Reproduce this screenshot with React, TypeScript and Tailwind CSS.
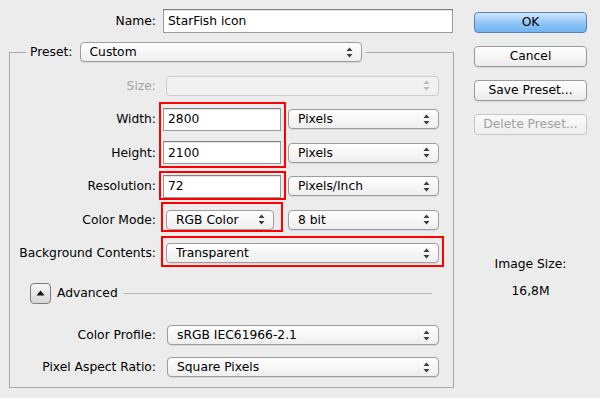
import type { ReactNode } from "react";

const font = "font-['DejaVu_Sans',sans-serif] text-[12.3px] text-black";

function Arrows({ dim = false }: { dim?: boolean }) {
  const c = dim ? "#b9b9b9" : "#3a3a3a";
  return (
    <svg width="7" height="11" viewBox="0 0 7 11" className="shrink-0">
      <path d="M3.5 0.5 L6.5 4 L0.5 4 Z" fill={c} />
      <path d="M3.5 10.5 L6.5 7 L0.5 7 Z" fill={c} />
    </svg>
  );
}

function Select({
  value,
  width,
  disabled = false,
  className = "",
}: {
  value?: string;
  width: string;
  disabled?: boolean;
  className?: string;
}) {
  return (
    <div
      className={`${width} ${className} h-[20px] flex items-center justify-between rounded-[4px] border pl-[9px] pr-[8px] ${
        disabled
          ? "border-[#cdcdcd] bg-[#f1f1f1]"
          : "border-[#9d9d9d] bg-linear-to-b from-white to-[#eeeeee] shadow-[0_1px_0_rgba(0,0,0,0.08)]"
      }`}
    >
      <span className="truncate leading-none">{value}</span>
      <Arrows dim={disabled} />
    </div>
  );
}

function Input({ value, width }: { value: string; width: string }) {
  return (
    <div
      className={`${width} h-[23px] flex items-center bg-white border border-[#9a9a9a] border-t-[#7e7e7e] pl-[4px] shadow-[inset_0_1px_1px_rgba(0,0,0,0.12)]`}
    >
      {value}
    </div>
  );
}

function Row({
  label,
  dim = false,
  h = "h-[33.5px]",
  children,
}: {
  label: string;
  dim?: boolean;
  h?: string;
  children: ReactNode;
}) {
  return (
    <div className={`flex items-center ${h}`}>
      <div
        className={`w-[147px] text-right pr-px ${dim ? "text-[#a3a3a3]" : ""}`}
      >
        {label}
      </div>
      <div className="flex items-center pl-[6px]">{children}</div>
    </div>
  );
}

function Button({
  children,
  primary = false,
  disabled = false,
}: {
  children: ReactNode;
  primary?: boolean;
  disabled?: boolean;
}) {
  return (
    <div
      className={`w-[113px] h-[21px] rounded-[4px] border flex items-center justify-center ${
        primary
          ? "border-[#5a84b9] bg-linear-to-b from-[#d3e8fc] via-[#93c6f6] to-[#6eb3f1]"
          : disabled
            ? "border-[#c6c6c6] bg-linear-to-b from-[#fafafa] to-[#eeeeee] text-[#a0a0a0]"
            : "border-[#9a9a9a] bg-linear-to-b from-white to-[#ececec] shadow-[0_1px_0_rgba(0,0,0,0.08)]"
      }`}
    >
      {children}
    </div>
  );
}

function RedBox({ className }: { className: string }) {
  return (
    <div
      className={`absolute border-2 border-[#ff0000] pointer-events-none ${className}`}
    />
  );
}

export default function App() {
  return (
    <div className={`relative w-[600px] h-[398px] bg-[#ececec] flex ${font}`}>
      <div className="w-[454px] pl-[9px] pt-[9px] flex flex-col">
        <div className="flex items-center h-[24px]">
          <div className="w-[148px] text-right pr-px">Name:</div>
          <div className="pl-[6px]">
            <div className="w-[290px] h-[24px] flex items-center bg-white border border-[#9a9a9a] border-t-[#7e7e7e] pl-[4px] shadow-[inset_0_1px_1px_rgba(0,0,0,0.12)]">
              StarFish icon
            </div>
          </div>
        </div>

        <fieldset className="mt-[9px] border border-[#a9a9a9] pt-[7px] pb-[4px]">
          <legend className="ml-[16px] px-[4px] flex items-center">
            <span>Preset:</span>
            <Select value="Custom" width="w-[282px]" className="ml-[7px]" />
          </legend>

          <Row label="Size:" dim>
            <Select width="w-[273px]" disabled className="ml-[3px]" />
          </Row>
          <Row label="Width:">
            <Input value="2800" width="w-[118px]" />
            <Select value="Pixels" width="w-[151px]" className="ml-[7px]" />
          </Row>
          <Row label="Height:">
            <Input value="2100" width="w-[118px]" />
            <Select value="Pixels" width="w-[151px]" className="ml-[7px]" />
          </Row>
          <Row label="Resolution:">
            <Input value="72" width="w-[118px]" />
            <Select value="Pixels/Inch" width="w-[151px]" className="ml-[7px]" />
          </Row>
          <Row label="Color Mode:">
            <Select value="RGB Color" width="w-[108px]" className="ml-[3px]" />
            <Select value="8 bit" width="w-[151px]" className="ml-[14px]" />
          </Row>
          <Row label="Background Contents:">
            <Select value="Transparent" width="w-[273px]" className="ml-[3px]" />
          </Row>

          <div className="mt-[12px] h-[22px] flex items-center pl-[20px] pr-[21px]">
            <div className="w-[21px] h-[21px] rounded-[4px] border border-[#7d7d7d] bg-linear-to-b from-[#f7f7f7] to-[#d6d6d6] flex items-center justify-center">
              <svg width="9" height="6" viewBox="0 0 9 6">
                <path d="M4.5 0.5 L8.5 5.5 L0.5 5.5 Z" fill="#111" />
              </svg>
            </div>
            <span className="ml-[6px]">Advanced</span>
            <div className="flex-1 ml-[6px] h-px bg-[#b3b3b3]" />
          </div>

          <Row label="Color Profile:" h="h-[32px] mt-[15px]">
            <Select value="sRGB IEC61966-2.1" width="w-[272px]" className="ml-[4px]" />
          </Row>
          <Row label="Pixel Aspect Ratio:" h="h-[32px]">
            <Select value="Square Pixels" width="w-[272px]" className="ml-[4px]" />
          </Row>
        </fieldset>
      </div>

      <div className="flex-1 pt-[12px] pl-[20px] flex flex-col">
        <div className="flex flex-col gap-[13px]">
          <Button primary>OK</Button>
          <Button>Cancel</Button>
          <Button>Save Preset...</Button>
          <Button disabled>Delete Preset...</Button>
        </div>
        <div className="w-[113px] mt-[120px] flex flex-col items-center">
          <div>Image Size:</div>
          <div className="mt-[9px]">16,8M</div>
        </div>
      </div>

      <RedBox className="left-[159px] top-[102px] w-[127px] h-[66px]" />
      <RedBox className="left-[159px] top-[171px] w-[127px] h-[29px]" />
      <RedBox className="left-[161px] top-[202px] w-[122px] h-[30px]" />
      <RedBox className="left-[161px] top-[236px] w-[283px] h-[31px]" />
    </div>
  );
}
